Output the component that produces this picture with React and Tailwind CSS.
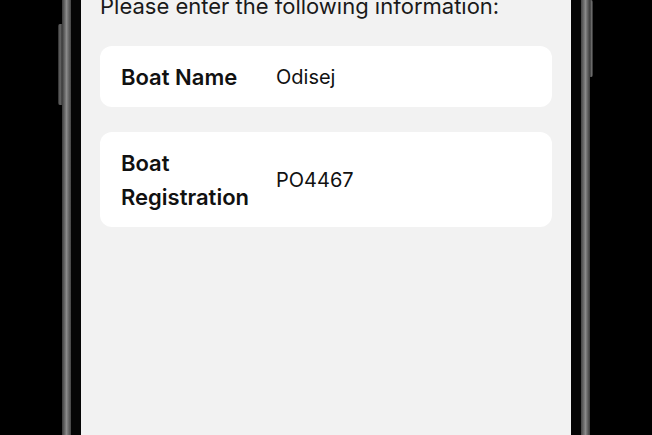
import React from "react";

function Row({ label, value }) {
  return (
    <div className="flex items-center rounded-[12px] bg-white px-[21px] py-[13.5px]">
      <div className="w-[155px] shrink-0 pr-[10px] text-[22px] font-semibold leading-[34px] text-[#111]">
        {label}
      </div>
      <div className="text-[20px] leading-[34px] text-[#111]">{value}</div>
    </div>
  );
}

export default function App() {
  return (
    <div
      className="flex h-[435px] w-[652px] overflow-hidden bg-black"
      style={{ fontFamily: 'Inter, "Noto Sans", Arial, sans-serif' }}
    >
      <div className="w-[58px] shrink-0" />
      <div className="w-[4px] shrink-0 pt-[24px]">
        <div className="h-[81px] w-[4px] rounded-l-[2px] bg-gradient-to-r from-[#2a2a2a] via-[#6a6a6a] to-[#3a3a3a]" />
      </div>
      <div className="w-[9px] shrink-0 bg-gradient-to-r from-[#3a3a3a] via-[#8a8a8a] to-[#444]" />
      <div className="w-[10px] shrink-0 bg-[#050505]" />
      <div className="w-[490px] shrink-0 bg-[#f2f2f2] px-[19px]">
        <p className="-mt-[8px] whitespace-nowrap text-[22px] leading-[28px] text-[#1a1a1a]">
          Please enter the following information:
        </p>
        <div className="mt-[26px] flex flex-col gap-[25px]">
          <Row label="Boat Name" value="Odisej" />
          <Row label={<>Boat<br />Registration</>} value="PO4467" />
        </div>
      </div>
      <div className="w-[10px] shrink-0 bg-[#050505]" />
      <div className="w-[9px] shrink-0 bg-gradient-to-r from-[#444] via-[#8a8a8a] to-[#3a3a3a]" />
      <div className="w-[3px] shrink-0">
        <div className="h-[77px] w-[3px] rounded-r-[2px] bg-gradient-to-r from-[#3a3a3a] via-[#6a6a6a] to-[#2a2a2a]" />
      </div>
      <div className="flex-1" />
    </div>
  );
}
